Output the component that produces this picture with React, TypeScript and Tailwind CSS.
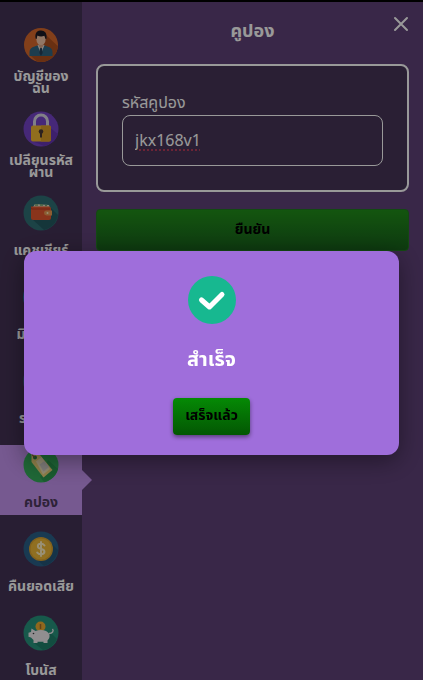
import { useState } from "react";
import type { ReactNode } from "react";

function AccountIcon() {
  return (
    <svg viewBox="0 0 36 36" className="size-9" aria-hidden="true">
      <defs>
        <clipPath id="account-clip">
          <circle cx="18" cy="18" r="17" />
        </clipPath>
      </defs>
      <circle cx="18" cy="18" r="17" fill="#d96a2c" />
      <g clipPath="url(#account-clip)">
        <path d="M23 8 40 24v16H20L8 29Z" fill="#b0501f" />
        <path d="M6.500 29v-4c0-3 2-4.500 5-5.500l4-1.500h5l4 1.500c3 1 5 2.500 5 5.500v4Z" fill="#2f6683" />
        <path d="m14.500 18 3.500 9 3.500-9Z" fill="#e8e4dc" />
        <path d="m17 21 1-1 1 1 .6 5-1.600 3-1.600-3Z" fill="#25405a" />
      </g>
      <path d="M15.500 15h5v4L18 21.500 15.500 19Z" fill="#dba98b" />
      <ellipse cx="18" cy="12.500" rx="4.600" ry="5.500" fill="#f2c6a8" />
      <path d="M12.800 12c-1.300-5 .7-8 4.200-8.500 4-.6 7.600 2 6.400 8.500l-1-.2-1-3c-2.500 1-5 .8-7.100-.3l-.6 3.300Z" fill="#1b1b25" />
    </svg>
  );
}

function LockIcon() {
  return (
    <svg viewBox="0 0 36 36" className="size-9" aria-hidden="true">
      <circle cx="18" cy="18" r="17.500" fill="#7543c8" />
      <path d="m26 16 9 7c-2 6-7 11-14 12L9 30Z" fill="#6636b4" />
      <path d="M11.500 16v-5.500a6.500 6.500 0 0 1 13 0V16" fill="none" stroke="#d8d5e2" strokeWidth="3" />
      <rect x="8" y="14.500" width="20" height="16" rx="2" fill="#f2b833" />
      <path d="M18 14.500h8a2 2 0 0 1 2 2v12a2 2 0 0 1-2 2h-8Z" fill="#dd9f27" />
      <circle cx="18" cy="20.500" r="2.300" fill="#4c3a35" />
      <path d="M17 21h2v5.500h-2Z" fill="#4c3a35" />
    </svg>
  );
}

function WalletIcon() {
  return (
    <svg viewBox="0 0 36 36" className="size-9" aria-hidden="true">
      <circle cx="18" cy="18" r="17.500" fill="#2f7076" />
      <path d="m28 13 7 7c-1 7-6 13-14 15L9 24Z" fill="#235a62" />
      <path d="m10 12 2-3 14 1 1 4H10Z" fill="#e5dfc4" />
      <path d="M12 10h3m2 0h3m2 .5h2" stroke="#6da36f" strokeWidth="1.500" />
      <path d="M8 11.500h18a2 2 0 0 1 2 2V23a2 2 0 0 1-2 2H10a2 2 0 0 1-2-2Z" fill="#e4572e" />
      <path d="M8 11.500c0 1.500 1 2 2 2h17v1H9c-1 0-1-1-1-3Z" fill="#b93f22" />
      <path d="M23.500 15.500H29v5h-5.500a2.500 2.500 0 0 1 0-5Z" fill="#e99b54" />
      <circle cx="24.500" cy="18" r="1" fill="#fff0bd" />
    </svg>
  );
}

function MinigameIcon() {
  return (
    <svg viewBox="0 0 36 36" className="size-9" aria-hidden="true">
      <circle cx="18" cy="18" r="18" fill="#2676a8" />
      <circle cx="18" cy="18" r="10" fill="#fff" />
      <circle cx="18" cy="18" r="6" fill="#e0572f" />
    </svg>
  );
}

function HistoryIcon() {
  return (
    <svg viewBox="0 0 36 36" className="size-9" aria-hidden="true">
      <circle cx="18" cy="18" r="18" fill="#3c5f80" />
      <path d="M10 26V18h4v8Zm6 0V13h4v13Zm6 0V9h4v17Z" fill="#f2c14e" />
    </svg>
  );
}

function TagIcon() {
  return (
    <svg viewBox="0 0 36 36" className="size-9" aria-hidden="true">
      <circle cx="18" cy="18" r="17.500" fill="#35ad5c" />
      <path d="m25 13 10 9c-2 7-8 12-14 13l-4-5Z" fill="#2c9a50" />
      <path d="M8.500 5.500 17 8l12.500 15-9 7.500L8.500 15Z" fill="#efd57b" />
      <path d="m13 14.500 5.500-4.500L27 22l-7 5.500Z" fill="#f4e7bd" />
      <path d="m16.500 17.500 5-3.500 4.500 6-5.500 4.500Z" fill="#d5d1cc" />
      <circle cx="12" cy="10.500" r="2" fill="#268346" />
      <path d="M12 10.500c-2-1-3-3-3-5" fill="none" stroke="#805f38" strokeWidth="1.200" />
    </svg>
  );
}

function CoinIcon() {
  return (
    <svg viewBox="0 0 36 36" className="size-9" aria-hidden="true">
      <circle cx="18" cy="18" r="17.500" fill="#2a6289" />
      <path d="m26 10 9 9c-1 8-7 14-14 16l-10-9Z" fill="#235679" />
      <circle cx="18" cy="18" r="12" fill="#dba22f" />
      <circle cx="18" cy="18" r="10.500" fill="#f1b937" />
      <path d="M21.500 14.500c-.8-1.200-2-1.800-3.500-1.800-4.200 0-4.200 4.500 0 5.200 4.600.7 4.600 5.400 0 5.400-1.600 0-3-.6-3.800-1.800M18 11v14" fill="none" stroke="#fff0c4" strokeWidth="2" strokeLinecap="round" />
    </svg>
  );
}

function PiggyIcon() {
  return (
    <svg viewBox="0 0 36 36" className="size-9" aria-hidden="true">
      <circle cx="18" cy="18" r="17.500" fill="#27947d" />
      <path d="m28 18 6 6c-3 6-7 10-14 11l-9-7Z" fill="#1f806c" />
      <circle cx="17.500" cy="11.500" r="5" fill="#eeae32" />
      <path d="M17.500 9v5" stroke="#a86b23" strokeWidth="1.500" />
      <path d="m8.500 13.500 4 2.500c3.500-1.200 7.500-1.200 10.500 0 3.200 1.500 4.500 4.500 3 7.500l-1.500 2V28h-4v-1.200h-6V28h-4v-3L8 22.500l-2.500-.7v-4L8 17Z" fill="#f0edf0" />
      <path d="M26 18.500c3.500 0 5-2.500 3.500-4.500" fill="none" stroke="#f0edf0" strokeWidth="1.300" />
      <circle cx="10.500" cy="18.500" r=".8" fill="#38383e" />
    </svg>
  );
}

type MenuItem = {
  id: string;
  label: string;
  icon: ReactNode;
};

const menuItems: MenuItem[] = [
  { id: "account", label: "บัญชีของฉัน", icon: <AccountIcon /> },
  { id: "password", label: "เปลียนรหัสผ่าน", icon: <LockIcon /> },
  { id: "cashier", label: "แคชเชียร์", icon: <WalletIcon /> },
  { id: "minigame", label: "มินิเกมส์", icon: <MinigameIcon /> },
  { id: "history", label: "รายการ", icon: <HistoryIcon /> },
  { id: "coupon", label: "คปอง", icon: <TagIcon /> },
  { id: "cashback", label: "คืนยอดเสีย", icon: <CoinIcon /> },
  { id: "bonus", label: "โบนัส", icon: <PiggyIcon /> },
];

function Sidebar() {
  const [active, setActive] = useState("coupon");

  return (
    <nav className="relative z-10 flex w-[82px] shrink-0 flex-col gap-3.5 bg-[#443255] pt-[23px]">
      {menuItems.map((item) => (
        <button
          key={item.id}
          type="button"
          onClick={() => setActive(item.id)}
          className={
            item.id === active
              ? "relative flex shrink-0 flex-col items-center gap-2 bg-[#c594f0] pt-0.5 text-[#4d3a5e]"
              : "relative flex shrink-0 flex-col items-center gap-2 pt-0.5 text-white"
          }
        >
          {item.icon}
          <span className="flex h-6 w-full items-center justify-center px-1.5 text-center text-sm leading-3 font-bold">
            {item.label}
          </span>
          {item.id === active && (
            <svg viewBox="0 0 10 20" className="absolute top-[25px] left-full h-5 w-2.5 fill-[#c594f0]" aria-hidden="true">
              <path d="M0 0 10 10 0 20Z" />
            </svg>
          )}
        </button>
      ))}
    </nav>
  );
}

function CouponPanel() {
  const [code, setCode] = useState("jkx168v1");

  return (
    <main className="relative min-w-0 flex-1 bg-[#5f4178] px-3.5 pt-4">
      <h1 className="text-center text-lg leading-7 font-bold text-white">คูปอง</h1>
      <button type="button" aria-label="ปิด" className="absolute top-3 right-3 text-white">
        <svg viewBox="0 0 20 20" className="size-5" fill="none" stroke="currentColor" strokeWidth="2" strokeLinecap="round">
          <path d="m4 4 12 12M16 4 4 16" />
        </svg>
      </button>
      <form onSubmit={(e) => e.preventDefault()}>
        <div className="mt-[18px] rounded-lg border-2 border-white bg-[#463557] px-6 pt-[25px] pb-6">
          <label htmlFor="coupon-code" className="block text-base leading-6 text-white">
            รหัสคูปอง
          </label>
          <input
            id="coupon-code"
            type="text"
            value={code}
            onChange={(e) => setCode(e.target.value)}
            className="h-[51px] w-full rounded-lg border border-white bg-transparent px-3 text-base text-white underline decoration-[#d0405c] decoration-dotted underline-offset-4 outline-none"
          />
        </div>
        <button
          type="submit"
          className="mt-[17px] h-[42px] w-full rounded border border-[#217a20] bg-linear-to-b from-[#218f19] to-[#17601a] text-sm font-bold text-black"
        >
          ยืนยัน
        </button>
      </form>
    </main>
  );
}

function SuccessDialog({ onClose }: { onClose: () => void }) {
  return (
    <div className="fixed inset-0 z-20 flex items-center justify-center bg-black/40 px-6 pt-[25px]">
      <div
        role="dialog"
        aria-modal="true"
        aria-labelledby="dialog-title"
        className="flex w-full max-w-md flex-col items-center rounded-xl bg-[#9f6edb] pt-[25px] pb-5 shadow-[0_6px_24px_rgba(0,0,0,0.4)]"
      >
        <svg viewBox="0 0 48 48" className="size-12" aria-hidden="true">
          <circle cx="24" cy="24" r="24" fill="#17b890" />
          <path d="m13.500 24 8 7L34 18.500" fill="none" stroke="#fff" strokeWidth="5" strokeLinecap="round" strokeLinejoin="round" />
        </svg>
        <h2 id="dialog-title" className="mt-5 text-xl leading-8 font-bold text-white">
          สำเร็จ
        </h2>
        <button
          type="button"
          onClick={onClose}
          className="mt-[22px] h-[37px] rounded bg-linear-to-b from-[#058a05] to-[#035703] px-3 text-sm font-bold text-black shadow-[0_2px_4px_rgba(0,0,0,0.45)]"
        >
          เสร็จแล้ว
        </button>
      </div>
    </div>
  );
}

export default function App() {
  const [open, setOpen] = useState(true);

  return (
    <div className="flex h-screen overflow-hidden border-t-2 border-black bg-[#5f4178] font-['Noto_Sans_Thai','Noto_Sans',sans-serif]">
      <Sidebar />
      <CouponPanel />
      {open && <SuccessDialog onClose={() => setOpen(false)} />}
    </div>
  );
}
